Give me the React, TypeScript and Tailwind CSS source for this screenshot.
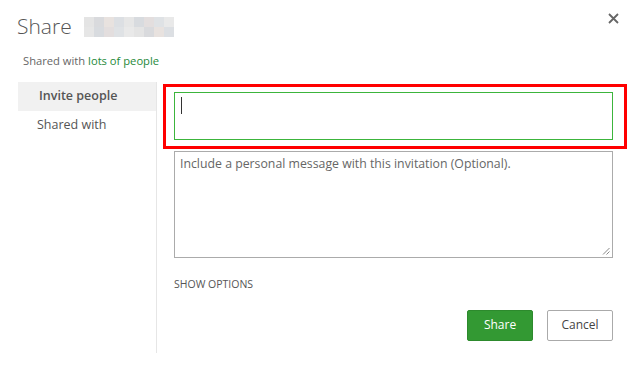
import React from 'react';

const blur = [
  '#e4e4e4', '#d9dadd', '#e8e2df', '#dcdfe3', '#e6e6e6', '#d8dbdf', '#e3dede', '#dfe2e5', '#e9e9e9',
];

export default function App() {
  return (
    <div className="w-[633px] h-[365px] bg-white relative font-['Open_Sans','Noto_Sans',sans-serif] text-[#444]">
      {/* Header */}
      <div className="flex items-center pl-[17px] pt-[12px] h-[41px]">
        <span className="text-[21px] font-light text-[#555] leading-none">Share</span>
        <div className="ml-[12px] flex h-[20px] items-stretch">
          {blur.map((c, i) => (
            <div key={i} className="w-[10px] flex flex-col">
              <div className="flex-1" style={{ background: c }} />
              <div className="flex-1" style={{ background: blur[(i + 4) % blur.length] }} />
            </div>
          ))}
        </div>
      </div>
      <button className="absolute top-[10px] right-[12px] w-[16px] h-[16px] flex items-center justify-center text-[#666]">
        <svg width="11" height="11" viewBox="0 0 11 11" fill="none" stroke="currentColor" strokeWidth="1.8">
          <path d="M1 1l9 9M10 1l-9 9" />
        </svg>
      </button>

      <div className="pl-[23px] pt-[14px] text-[11.2px] leading-none">
        <span className="text-[#666]">Shared with </span>
        <span className="text-[#1f8a3a]">lots of people</span>
      </div>

      {/* Body */}
      <div className="flex pl-[18px] pt-[18px]">
        <div className="w-[139px] border-r border-[#e6e6e6] h-[271px] -mt-[2px]">
          <div className="h-[29px] bg-[#f1f1f1] flex items-center pl-[21px] text-[12.5px] font-semibold text-[#555]">
            Invite people
          </div>
          <div className="h-[29px] flex items-center pl-[19px] text-[12.5px] text-[#555]">
            Shared with
          </div>
        </div>

        <div className="w-[439px] ml-[17px] pt-[8px]">
          <div className="relative">
            <div className="h-[48px] border border-[#3cb53c] pl-[6px] pt-[4px]">
              <div className="w-[1px] h-[17px] bg-[#333]" />
            </div>
            <div className="absolute -left-[11px] -right-[14px] -top-[8px] -bottom-[9px] border-[3px] border-[#ff0000]" />
          </div>

          <div className="mt-[11px] h-[107px] border border-[#ababab] relative px-[5px] pt-[3px] text-[12.3px] text-[#666]">
            Include a personal message with this invitation (Optional).
            <svg className="absolute right-[2px] bottom-[2px]" width="8" height="8" viewBox="0 0 8 8" stroke="#888" strokeWidth="1">
              <path d="M1 7.5L7.5 1M4.5 7.5L7.5 4.5" />
            </svg>
          </div>

          <div className="mt-[21px] text-[10.5px] text-[#555] leading-none">SHOW OPTIONS</div>

          <div className="flex justify-end gap-[14px] mt-[20px]">
            <button className="w-[66px] h-[31px] bg-[#339933] border border-[#2d8a2d] rounded-[2px] text-white text-[12px]">
              Share
            </button>
            <button className="w-[66px] h-[31px] bg-white border border-[#aaa] rounded-[2px] text-[#444] text-[12px]">
              Cancel
            </button>
          </div>
        </div>
      </div>
    </div>
  );
}
